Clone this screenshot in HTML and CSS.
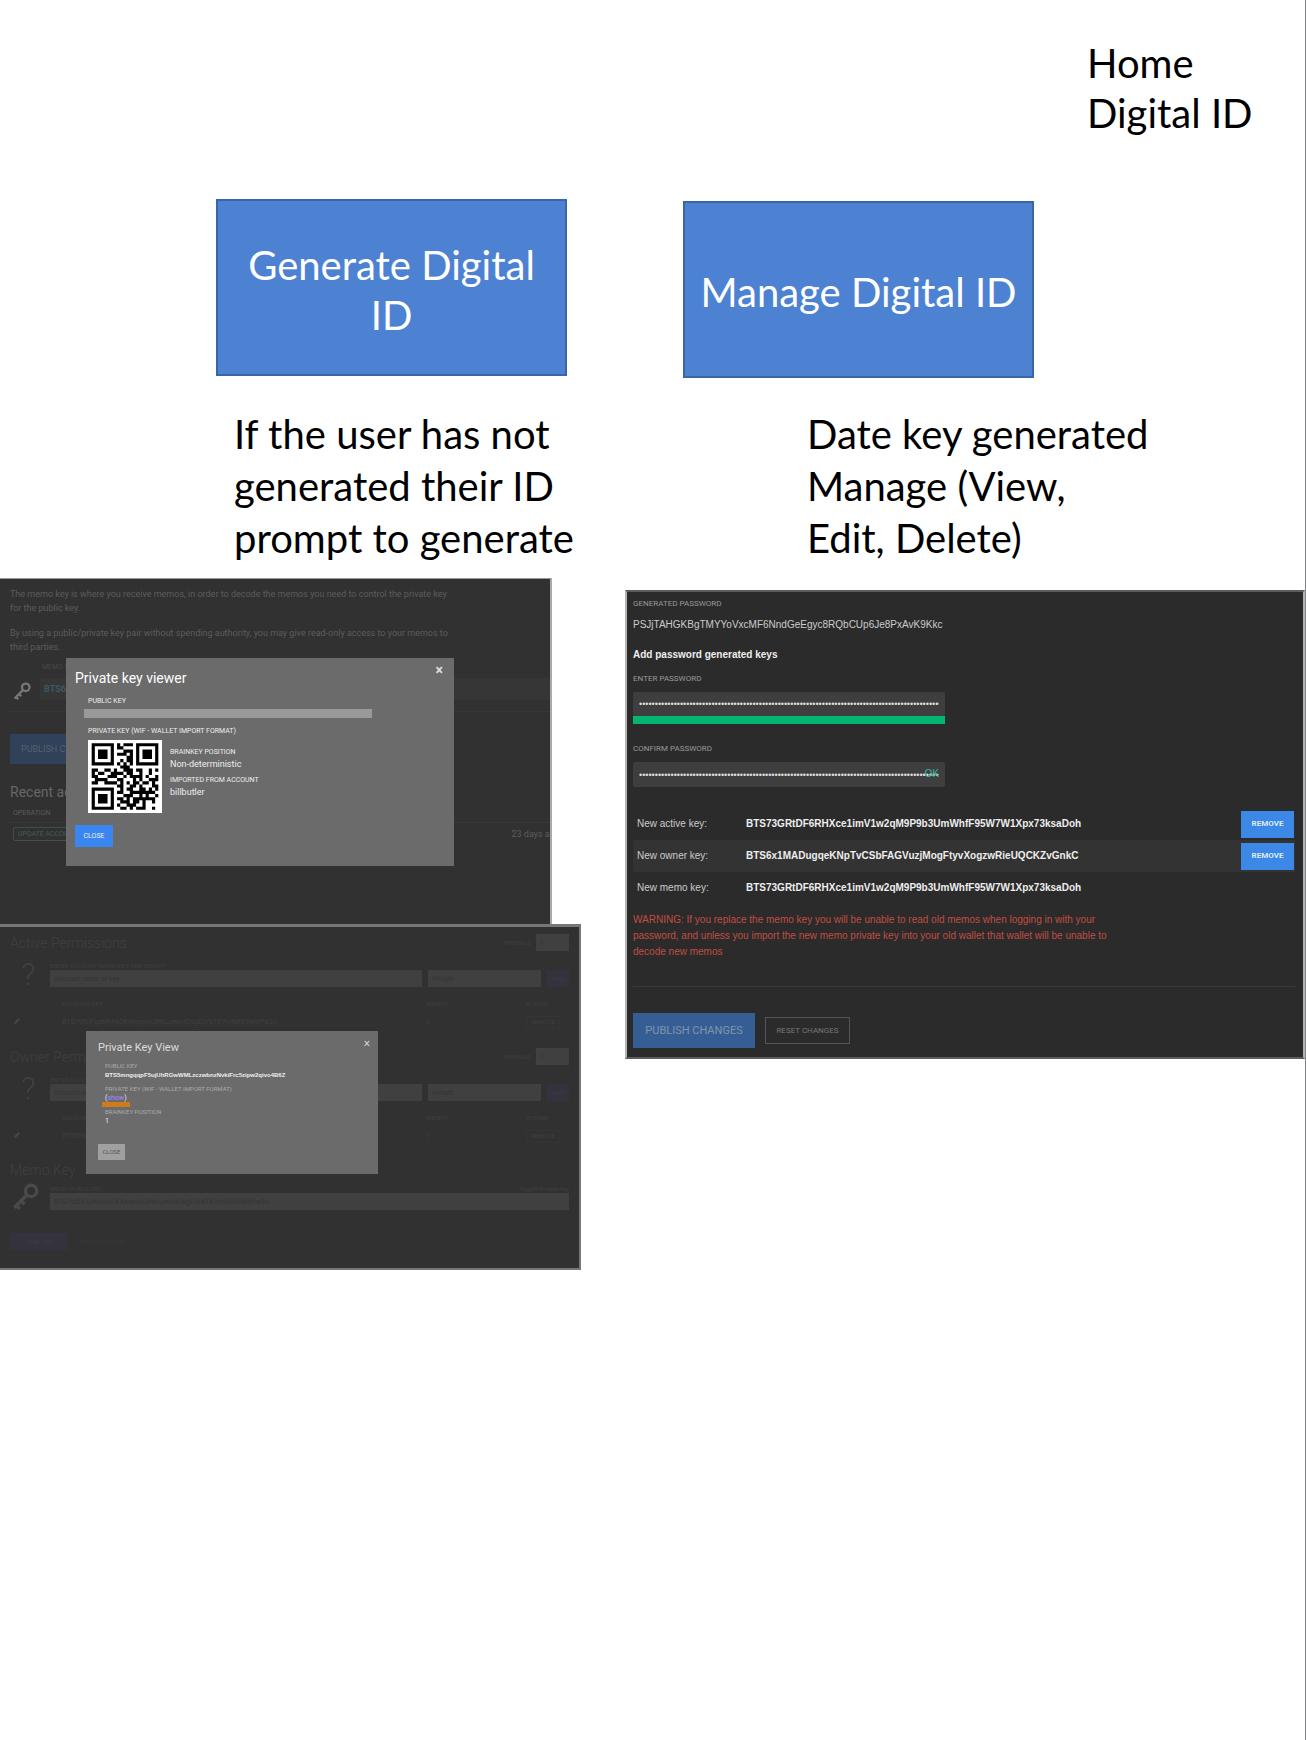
FILE: index.html
```html
<!DOCTYPE html>
<html lang="en">
<head>
<meta charset="utf-8">
<title>Digital ID</title>
<link rel="stylesheet" href="styles.css">
</head>
<body>
<header class="top">
  <nav class="nav"><a href="#home">Home</a><a href="#digital-id">Digital ID</a></nav>
</header>
<main class="board">
  <section class="col col-generate">
    <button class="action" type="button">Generate Digital ID</button>
    <p class="note">If the user has not<br>generated their ID<br>prompt to generate</p>

    <div class="shot viewer">
      <p class="memo-text">The memo key is where you receive memos, in order to decode the memos you need to control the private key<br>for the public key.</p>
      <p class="memo-text">By using a public/private key pair without spending authority, you may give read-only access to your memos to<br>third parties.</p>
      <div class="memo-key">
        <svg class="key-icon" viewBox="0 0 24 24"><circle cx="17" cy="7" r="5"/><path d="M13.500 10.500L2 22M4 20l3 3M8 16l3 3"/></svg>
        <div class="memo-field"><span class="cap">MEMO PUBLIC KEY</span><span class="memo-value">BTS6</span></div>
      </div>
      <button class="viewer-publish" type="button">PUBLISH CHANGES</button>
      <h2 class="viewer-heading">Recent activity</h2>
      <span class="cap operation">OPERATION</span>
      <div class="activity"><span class="tag">UPDATE ACCOUNT</span><span class="when">23 days ago</span></div>

      <div class="modal modal-viewer" role="dialog" aria-label="Private key viewer">
        <button class="x" type="button">×</button>
        <h2 class="modal-title">Private key viewer</h2>
        <div class="modal-body">
          <span class="cap">PUBLIC KEY</span>
          <div class="redacted"></div>
          <span class="cap">PRIVATE KEY (WIF - WALLET IMPORT FORMAT)</span>
          <div class="qr-row">
            <svg class="qr" viewBox="-1 -1 23 23"><path id="qr"/></svg>
            <dl class="facts">
              <dt class="cap">BRAINKEY POSITION</dt><dd>Non-deterministic</dd>
              <dt class="cap">IMPORTED FROM ACCOUNT</dt><dd>billbutler</dd>
            </dl>
          </div>
        </div>
        <button class="close" type="button">CLOSE</button>
      </div>
    </div>

    <div class="shot permissions">
      <section class="perm">
        <div class="perm-head"><h2>Active Permissions</h2><label for="t1">THRESHOLD</label><input id="t1" class="mini" value="1"></div>
        <div class="perm-form">
          <span class="question">?</span>
          <label class="grow"><span>ENTER ACCOUNT NAME/KEY AND WEIGHT</span><input value="Account name or key"></label>
          <input class="weight" aria-label="Weight" value="Weight">
          <button class="add" type="button">ADD</button>
        </div>
        <table class="perm-table">
          <tr><th></th><th>ACCOUNT/KEY</th><th>WEIGHT</th><th>ACTION</th></tr>
          <tr><td><svg class="pencil" viewBox="0 0 8 8"><path d="M1 7l1-3 4-4 2 2-4 4z"/></svg></td><td>BTS7s5DFqaMvhxCKXeqonA3NeLpwc4GsgELYaTX7vvMf8SNf6PaGu</td><td>1</td><td><button type="button">REMOVE</button></td></tr>
        </table>
      </section>
      <section class="perm">
        <div class="perm-head"><h2>Owner Permissions</h2><label for="t2">THRESHOLD</label><input id="t2" class="mini" value="1"></div>
        <div class="perm-form">
          <span class="question">?</span>
          <label class="grow"><span>ENTER ACCOUNT NAME/KEY AND WEIGHT</span><input value="Account name or key"></label>
          <input class="weight" aria-label="Weight" value="Weight">
          <button class="add" type="button">ADD</button>
        </div>
        <table class="perm-table">
          <tr><th></th><th>ACCOUNT/KEY</th><th>WEIGHT</th><th>ACTION</th></tr>
          <tr><td><svg class="pencil" viewBox="0 0 8 8"><path d="M1 7l1-3 4-4 2 2-4 4z"/></svg></td><td>BTS5mngqqpF5uj</td><td>1</td><td><button type="button">REMOVE</button></td></tr>
        </table>
      </section>
      <section class="memo">
        <h2>Memo Key</h2>
        <div class="memo-row">
          <svg class="key-icon big" viewBox="0 0 24 24"><circle cx="17" cy="7" r="5"/><path d="M13.500 10.500L2 22M4 20l3 3M8 16l3 3"/></svg>
          <div class="grow">
            <div class="memo-labels"><label for="memo">MEMO PUBLIC KEY</label><span>Toggle Private Key</span></div>
            <input id="memo" value="BTS7s5DFqaMvhxCKXeqonA3NeLpwc4GsgELYaTX7vvMf8SNf6PaGu">
          </div>
        </div>
        <div class="memo-actions"><button class="save" type="button">PUBLISH</button><button class="reset-faint" type="button">RESET CHANGES</button></div>
      </section>

      <div class="modal modal-view" role="dialog" aria-label="Private Key View">
        <button class="x" type="button">×</button>
        <h2 class="modal-title">Private Key View</h2>
        <dl class="key-facts">
          <dt>PUBLIC KEY</dt><dd><b>BTS5mngqqpF5ujUhRGwWMLzczwbnzNvkiFrc5zipw2qivo4B6Z</b></dd>
          <dt>PRIVATE KEY (WIF - WALLET IMPORT FORMAT)</dt><dd>(<a href="#show">show</a>)<i class="marker"></i></dd>
          <dt>BRAINKEY POSITION</dt><dd>1</dd>
        </dl>
        <button class="close" type="button">CLOSE</button>
      </div>
    </div>
  </section>

  <section class="col col-manage">
    <button class="action" type="button">Manage Digital ID</button>
    <p class="note">Date key generated<br>Manage (View,<br>Edit, Delete)</p>

    <form class="shot keys">
      <span class="field-label">GENERATED PASSWORD</span>
      <p class="generated">PSJjTAHGKBgTMYYoVxcMF6NndGeEgyc8RQbCUp6Je8PxAvK9Kkc</p>
      <h2 class="keys-heading">Add password generated keys</h2>
      <label class="field-label" for="pw1">ENTER PASSWORD</label>
      <div class="pw strong"><input id="pw1" type="password" value="PSJjTAHGKBgTMYYoVxcMF6NndGeEgyc8RQbCUp6Je8PxAvK9KkcPSJjTAHGKBgTMYYoVxcMF6NndGeEgyc8RQbCUp6Je8PxAvK9Kkc"></div>
      <label class="field-label" for="pw2">CONFIRM PASSWORD</label>
      <div class="pw"><input id="pw2" type="password" value="PSJjTAHGKBgTMYYoVxcMF6NndGeEgyc8RQbCUp6Je8PxAvK9KkcPSJjTAHGKBgTMYYoVxcMF6NndGeEgyc8RQbCUp6Je8PxAvK9Kkc"><span class="ok">OK</span></div>
      <table class="key-table">
        <tr><td>New active key:</td><td><b>BTS73GRtDF6RHXce1imV1w2qM9P9b3UmWhfF95W7W1Xpx73ksaDoh</b></td><td><button type="button">REMOVE</button></td></tr>
        <tr><td>New owner key:</td><td><b>BTS6x1MADugqeKNpTvCSbFAGVuzjMogFtyvXogzwRieUQCKZvGnkC</b></td><td><button type="button">REMOVE</button></td></tr>
        <tr><td>New memo key:</td><td><b>BTS73GRtDF6RHXce1imV1w2qM9P9b3UmWhfF95W7W1Xpx73ksaDoh</b></td><td></td></tr>
      </table>
      <p class="warning">WARNING: If you replace the memo key you will be unable to read old memos when logging in with your<br>password, and unless you import the new memo private key into your old wallet that wallet will be unable to<br>decode new memos</p>
      <div class="form-actions"><button class="publish" type="button">PUBLISH CHANGES</button><button class="reset" type="reset">RESET CHANGES</button></div>
    </form>
  </section>
</main>
<script src="qr.js"></script>
</body>
</html>
```
FILE: qr.js
```js
const rows = [
  "1111111.1.111.1111111",
  "1.....1.11....1.....1",
  "1.111.1...111.1.111.1",
  "1.111.1.111.1.1.111.1",
  "1.111.1....11.1.111.1",
  "1.....1..1.11.1.....1",
  "1111111.1.1.1.1111111",
  ".........111.........",
  "11..11.1..111.11..1.1",
  "1.11..1111.11..1..1..",
  "11...111..1.1111.1..1",
  ".1111...11...1.1..111",
  "11..1111.1.1.11.11.1.",
  "........11..11.1...11",
  "1111111..1.11..11.1.1",
  "1.....1.11..11111111.",
  "1.111.1...111..1.1..1",
  "1.111.1.11.1.1111111.",
  "1.111.1..111.11.1..1.",
  "1.....1.1..111..1....",
  "1111111..11.1.111..1."
];
let d = "";
rows.forEach((row, y) => [...row].forEach((cell, x) => {
  if (cell === "1") d += `M${x} ${y}h1v1h-1z`;
}));
document.getElementById("qr").setAttribute("d", d);
```
FILE: styles.css
```css
* { box-sizing: border-box; }
body {
  margin: 0;
  min-height: 100vh;
  background: #fff;
  border-right: 1px solid #7f828f;
  color: #000;
  font-family: Lato, sans-serif;
}
h2, p, dl, dd { margin: 0; }
button, input { font: inherit; color: inherit; border: 0; border-radius: 0; padding: 0; margin: 0; background: none; }
.grow { flex: 1; min-width: 0; }

.top { display: flex; justify-content: flex-end; padding: 38px 58px 0 0; }
.nav { display: flex; flex-direction: column; width: 160px; font-size: 40px; line-height: 50px; white-space: nowrap; }
.nav a { color: inherit; text-decoration: none; }

.board { display: grid; grid-template-columns: minmax(0, 581fr) minmax(0, 680fr); column-gap: 44px; align-items: start; padding-top: 61px; }
.col { display: flex; flex-direction: column; align-items: flex-start; }
.action {
  width: 351px;
  height: 177px;
  padding: 5px 10px 0;
  border: 2px solid #3a65a8;
  background: #4d82d3;
  color: #fff;
  font-size: 40px;
  line-height: 50px;
}
.note { font-size: 40px; line-height: 52px; white-space: nowrap; }
.col-generate .action { margin-left: 216px; }
.col-generate .note { margin: 32px 0 14px 234px; }
.col-manage { padding-top: 2px; }
.col-manage .action { margin-left: 58px; }
.col-manage .note { margin: 30px 0 26px 182px; }

.shot { position: relative; background: #313131; font-family: Roboto, sans-serif; overflow: hidden; white-space: nowrap; }
.cap { display: block; font-size: 7px; line-height: 10px; }
.key-icon { width: 18px; height: 18px; fill: none; stroke: #777; stroke-width: 3; }
.modal { position: absolute; background: #6b6b6b; color: #eee; }
.x { position: absolute; font-weight: 700; }

/* Private key viewer */
.viewer { width: 95%; height: 346px; padding: 8px 0 0 10px; border-top: 1px solid #999; border-right: 2px solid #aaa; color: #5c5c5c; }
.memo-text { font-size: 9px; line-height: 14px; margin-bottom: 11px; }
.memo-key { display: flex; align-items: flex-end; gap: 9px; height: 49px; padding-left: 3px; padding-bottom: 11px; border-bottom: 1px solid #373737; margin-top: -2px; }
.memo-field { flex: 1; }
.memo-field .cap { color: #484848; padding-left: 2px; height: 16px; }
.memo-value { display: block; padding-left: 4px; background: #363636; color: #3d5961; font-size: 9px; line-height: 22px; font-weight: 700; }
.viewer-publish { display: block; width: 124px; height: 30px; margin-top: 22px; padding-left: 11px; background: #30415a; color: #56606c; font-size: 9px; text-align: left; }
.viewer-heading { margin-top: 18px; color: #666; font-size: 14px; line-height: 20px; font-weight: 400; }
.operation { padding: 6px 3px 0; height: 21px; border-bottom: 1px solid #373737; }
.activity { display: flex; justify-content: space-between; margin-right: -20px; padding: 4px 10px 0 3px; font-size: 9px; line-height: 14px; }
.tag { padding: 0 4px; border: 1px solid #3e4f50; border-radius: 2px; font-size: 7px; line-height: 12px; color: #47595a; }

.modal-viewer { left: 66px; top: 79px; width: 388px; height: 208px; padding: 10px 9px; }
.modal-viewer .x { right: 11px; top: 5px; font-size: 14px; line-height: 14px; color: #ddd; }
.modal-viewer .modal-title { font-size: 14px; line-height: 20px; font-weight: 400; color: #fff; }
.modal-body { padding: 8px 0 0 13px; }
.redacted { width: 288px; height: 9px; margin: 3px 0 8px -4px; background: #999; }
.qr-row { display: flex; gap: 8px; padding-top: 4px; }
.qr { width: 74px; height: 73px; background: #fff; }
.facts { padding-top: 7px; font-size: 9px; line-height: 14px; }
.facts dd { margin-bottom: 4px; }
.modal-viewer .close { display: block; width: 38px; height: 22px; margin-top: 12px; background: #3a86f0; font-size: 7px; }

/* Account permissions */
.permissions { width: 100%; padding: 7px 10px 18px; border: solid #777; border-width: 3px 2px 2px 0; color: #404040; font-size: 6px; line-height: 8px; }
.permissions h2 { font-size: 14px; line-height: 16px; font-weight: 300; }
.permissions input { height: 17px; background: #404040; color: #343434; padding: 0 4px; font-size: 7px; }
.perm { height: 114px; }
.perm-head { display: flex; align-items: center; }
.perm-head h2 { flex: 1; }
.perm-head label { margin-right: 5px; font-size: 5px; }
.permissions .mini { width: 33px; }
.perm-form { display: flex; align-items: flex-end; gap: 6px; height: 36px; }
.question { width: 34px; padding-left: 11px; color: #404040; font-size: 32px; line-height: 26px; font-weight: 300; }
.perm-form label { display: flex; flex-direction: column; }
.permissions .weight { width: 113px; }
.add { width: 22px; height: 17px; background: #34333d; color: #3c3b45; }
.perm-table { width: 100%; margin-top: 12px; border-collapse: collapse; table-layout: fixed; }
.perm-table th { height: 10px; padding: 0; text-align: left; font-weight: 400; }
.perm-table td { height: 26px; padding: 0; font-size: 7px; }
.perm-table th:nth-child(1) { width: 52px; }
.perm-table th:nth-child(3) { width: 100px; }
.perm-table th:nth-child(4) { width: 43px; }
.perm-table button { width: 34px; height: 13px; font-size: 6px; border: 1px solid #353535; }
.pencil { width: 7px; height: 7px; margin-left: 3px; fill: #454545; }
.memo-row { display: flex; align-items: flex-end; gap: 11px; padding: 7px 0 0 2px; height: 32px; }
.key-icon.big { width: 27px; height: 27px; stroke: #4a4a4a; }
.memo-labels { display: flex; justify-content: space-between; }
.memo-row input { display: block; width: 100%; }
.memo-actions { display: flex; gap: 12px; margin-top: 23px; }
.save { width: 58px; height: 17px; background: #34333d; color: #3c3b45; }
.reset-faint { color: #383838; }

.modal-view { left: 86px; top: 104px; width: 292px; height: 143px; padding: 9px 12px; color: #eee; }
.modal-view .x { right: 8px; top: 6px; font-size: 12px; line-height: 12px; font-weight: 300; }
.permissions .modal-title { font-size: 11px; font-weight: 400; color: #ddd; }
.key-facts { padding: 5px 0 0 7px; font-size: 6px; }
.key-facts dt { color: #aaa; font-size: 6px; line-height: 9px; }
.key-facts dd { height: 14px; line-height: 10px; font-size: 7px; }
.key-facts b { font: 700 6px/10px "Liberation Sans", sans-serif; }
.key-facts a { color: #9d8cff; text-decoration: none; }
.marker { display: block; width: 28px; height: 5px; margin-left: -3px; margin-top: -1px; background: #cf7a1b; }
.modal-view .close { width: 27px; height: 16px; margin-top: 14px; background: #a0a0a0; color: #555; }

/* Password generated keys */
.keys { width: 100%; padding: 6px 8px 9px 6px; border: solid #5c5c5c; border-width: 2px; border-left-color: #b5b5b5; border-right-color: #b5b5b5; background: #2b2b2b; color: #ccc; font: 10px/16px "Liberation Sans", sans-serif; }
.field-label { display: block; color: #999; font: 8px/12px Roboto, sans-serif; }
.generated { padding: 6px 0 13px; font-size: 10px; line-height: 18px; }
.keys-heading { font-size: 10px; line-height: 16px; margin-bottom: 10px; color: #eee; }
.pw { position: relative; width: 312px; height: 25px; margin: 7px 0 26px; }
.pw input { display: block; width: 100%; height: 100%; padding: 0 6px; border-radius: 2px; background: #3e3e3e; color: #ddd; font-size: 9px; }
.pw.strong { height: 32px; margin-bottom: 19px; border-bottom: 8px solid #04b56f; }
.ok { position: absolute; right: 6px; top: 4px; color: #36b8a5; }
.key-table { width: 100%; margin-top: -5px; border-collapse: collapse; table-layout: fixed; }
.key-table td { height: 32px; padding: 0 4px; }
.key-table td:nth-child(1) { width: 109px; }
.key-table td:nth-child(3) { width: 58px; }
.key-table tr:nth-child(2) { background: #333; }
.key-table b { color: #eee; }
.key-table button { display: block; width: 53px; height: 27px; background: #3b88e6; color: #dceaff; font: 700 8px/12px Roboto, sans-serif; }
.warning { padding: 8px 0 26px; border-bottom: 1px solid #3a3a3a; color: #c14d40; }
.form-actions { display: flex; align-items: center; gap: 10px; padding-top: 26px; }
.publish { width: 122px; height: 35px; background: #355f94; color: #8193ab; font: 11px/16px Roboto, sans-serif; }
.reset { width: 85px; height: 27px; border: 1px solid #555; color: #777; font: 8px/12px Roboto, sans-serif; }
```
